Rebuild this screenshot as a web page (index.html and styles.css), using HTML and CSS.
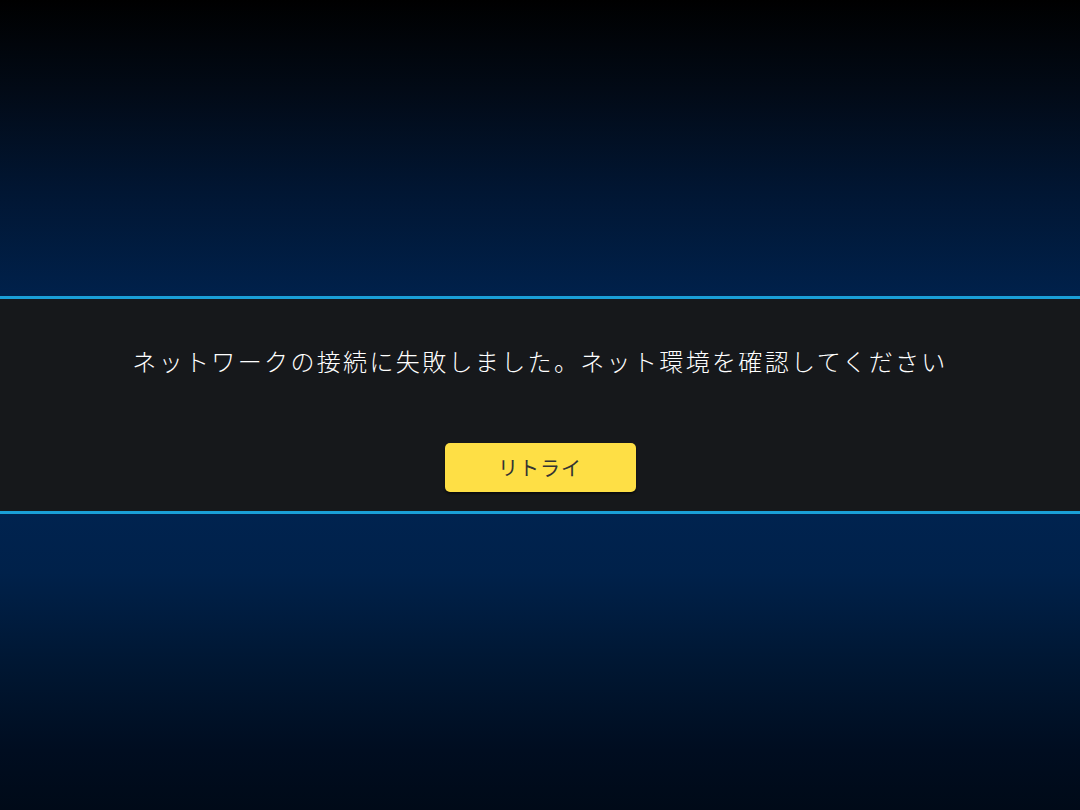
FILE: index.html
```html
<!DOCTYPE html>
<html lang="ja">
<head>
  <meta charset="UTF-8">
  <meta name="viewport" content="width=device-width, initial-scale=1.0">
  <title>接続エラー</title>
  <link rel="stylesheet" href="styles.css">
</head>
<body>
  <div class="screen">
    <div class="sky top"></div>
    <div class="dialog">
      <p class="message">ネットワークの接続に失敗しました。ネット環境を確認してください</p>
      <button class="retry" onclick="location.reload()">リトライ</button>
    </div>
    <div class="sky bottom"></div>
  </div>
</body>
</html>
```

FILE: styles.css
```css
html, body { margin: 0; height: 100%; }
body {
  font-family: "Noto Sans CJK JP", "Noto Sans", sans-serif;
  background: #000;
}
.screen {
  display: flex; flex-direction: column;
  height: 810px;
}
.sky { flex: 1; }
.sky.top { background: linear-gradient(to bottom, #000 0%, #020a16 30%, #011633 65%, #00214b 100%); }
.sky.bottom { background: linear-gradient(to bottom, #00234f 0%, #00214a 20%, #001733 50%, #000d20 80%, #000a18 100%); }
.dialog {
  background: #16181b;
  border-top: 3px solid #1a9fd6;
  border-bottom: 3px solid #1a9fd6;
  padding: 44px 0 19px;
  display: flex; flex-direction: column; align-items: center;
}
.message {
  margin: 0;
  color: #fff; font-size: 24px; line-height: 36px;
  font-weight: 300; letter-spacing: 2.35px;
}
.retry {
  margin-top: 64px;
  width: 191px; height: 49px;
  background: #fedf45; color: #333;
  border: none; border-radius: 5px;
  box-shadow: 0 2px 2px rgba(0, 0, 0, 0.5);
  font-family: inherit; font-size: 20px; letter-spacing: 1px;
  cursor: pointer;
}
```
